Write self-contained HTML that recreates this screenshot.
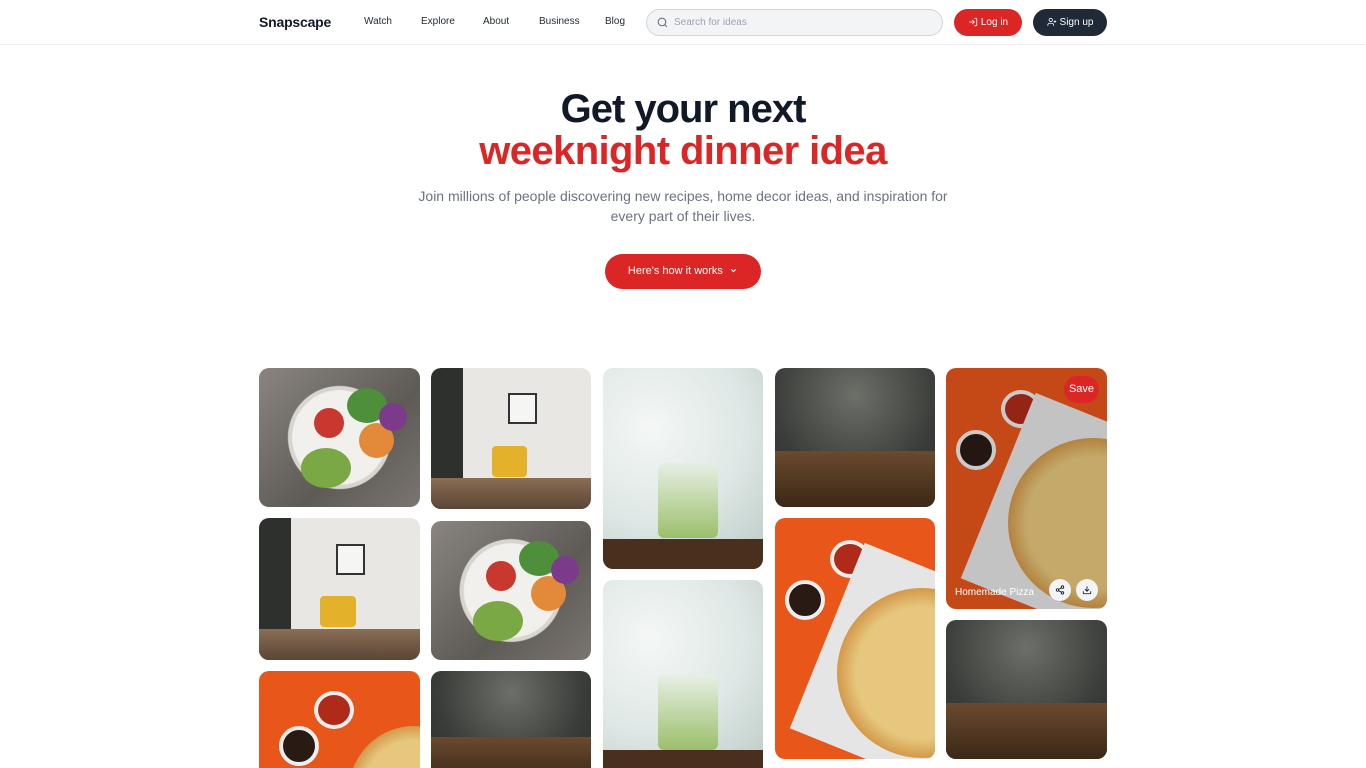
<!DOCTYPE html>
<html style="overflow:hidden;height:768px"><head><meta charset="utf-8">
<style>
*{box-sizing:border-box;margin:0;padding:0}
body{width:1366px;height:768px;overflow:hidden;background:#fff;font-family:"Liberation Sans",sans-serif;color:#111827;position:relative}
.hdr{position:absolute;left:0;top:0;width:1366px;height:45px;border-bottom:1px solid #eceef1;background:#fff}
.logo{position:absolute;left:259px;top:14px;font-weight:bold;font-size:14px;letter-spacing:-0.2px;color:#111827}
.nav{position:absolute;top:16px;font-size:10px;color:#1f2937}
.search{position:absolute;left:646px;top:9px;width:297px;height:27px;border:1px solid #d1d5db;border-radius:14px;background:#f3f4f6;font-size:10px;color:#9ca3af;padding:7px 0 0 27px}
.btn{position:absolute;top:9px;height:27px;border-radius:14px;color:#fff;font-size:10px;padding-top:8px;text-align:center}
h1{position:absolute;left:0;width:1366px;text-align:center;font-size:40px;font-weight:bold;letter-spacing:-1px;line-height:42px}
.sub{position:absolute;left:400px;width:566px;top:186px;text-align:center;font-size:14px;line-height:20px;color:#6b7280}
.cta{position:absolute;left:605px;top:254px;width:156px;height:35px;border-radius:18px;background:#dc2626;color:#fff;font-size:11px;text-align:center;padding-top:11px}
.t{position:absolute;border-radius:10px;overflow:hidden}
.salad{background:radial-gradient(circle at 50% 50%,#f1f0ec 0 44%,#d8d5cf 45% 48%,transparent 49%),linear-gradient(135deg,#8a8580,#5e5a56 60%,#7a756f)}
.salad i{position:absolute;border-radius:50%}
.room{background:linear-gradient(90deg,#2e302d 0 20%,#e8e7e4 20% 100%)}
.room:after{content:"";position:absolute;left:0;right:0;bottom:0;height:22%;background:linear-gradient(180deg,#8a6e55,#5b4535)}
.room b{position:absolute;left:38%;top:55%;width:22%;height:22%;background:#e3b22a;border-radius:4px;z-index:1}
.room u{position:absolute;left:48%;top:18%;width:18%;height:22%;background:#f5f5f3;border:2px solid #333}
.drink{background:radial-gradient(circle at 30% 30%,#f4f7f5,#dfe8e6 50%,#b9c9c4)}
.laptop{background:radial-gradient(circle at 50% 20%,#6d6f69,#3a3d39 60%,#2a2c29)}
.laptop:after{content:"";position:absolute;left:0;right:0;bottom:0;height:40%;background:linear-gradient(180deg,#6b4a2e,#3b2817)}
.pizza{background:#e8561a}
.pizza .pz{position:absolute;border-radius:50%;background:radial-gradient(circle,#e6c77d 0 55%,#d49b4c 70%,#b8732d 100%)}
.pizza .bw{position:absolute;border-radius:50%;border:4px solid #eee}
</style></head><body>
<div class="hdr">
<div class="logo">Snapscape</div>
<div class="nav" style="left:364px">Watch</div>
<div class="nav" style="left:421px">Explore</div>
<div class="nav" style="left:483px">About</div>
<div class="nav" style="left:539px">Business</div>
<div class="nav" style="left:605px">Blog</div>
<div class="search"><svg style="position:absolute;left:9px;top:6px" width="13" height="13" viewBox="0 0 24 24" fill="none" stroke="#6b7280" stroke-width="2"><circle cx="11" cy="11" r="7"/><path d="M20 20l-4-4"/></svg>Search for ideas</div>
<div class="btn" style="left:954px;width:68px;background:#dc2626"><svg style="vertical-align:-2px;margin-right:3px" width="10" height="10" viewBox="0 0 24 24" fill="none" stroke="#fff" stroke-width="2"><path d="M15 3h4a2 2 0 012 2v14a2 2 0 01-2 2h-4M10 17l5-5-5-5M15 12H3"/></svg>Log in</div>
<div class="btn" style="left:1033px;width:74px;background:#1f2937"><svg style="vertical-align:-2px;margin-right:3px" width="10" height="10" viewBox="0 0 24 24" fill="none" stroke="#fff" stroke-width="2"><circle cx="9" cy="7" r="4"/><path d="M2 21v-2a4 4 0 014-4h6a4 4 0 014 4v2M19 8v6M22 11h-6"/></svg>Sign up</div>
</div>
<h1 style="top:88px;color:#111827">Get your next</h1>
<h1 style="top:130px;color:#dc2626;letter-spacing:-0.6px">weeknight dinner idea</h1>
<div class="sub">Join millions of people discovering new recipes, home decor ideas, and inspiration for every part of their lives.</div>
<div class="cta">Here's how it works &nbsp;<svg style="vertical-align:-1px" width="9" height="9" viewBox="0 0 24 24" fill="none" stroke="#fff" stroke-width="3"><path d="M6 9l6 6 6-6"/></svg></div>

<div class="t salad" style="left:259px;top:368px;width:161px;height:139px"><i style="left:42px;top:80px;width:50px;height:40px;background:#7aa844"></i><i style="left:88px;top:20px;width:40px;height:35px;background:#4e8f3a"></i><i style="left:100px;top:55px;width:35px;height:35px;background:#e28a3a"></i><i style="left:55px;top:40px;width:30px;height:30px;background:#c9382f"></i><i style="left:120px;top:35px;width:28px;height:28px;background:#7b3a8a"></i></div>
<div class="t room" style="left:259px;top:518px;width:161px;height:142px"><u></u><b></b></div>
<div class="t pizza" style="left:259px;top:671px;width:161px;height:110px"><div class="bw" style="left:55px;top:20px;width:40px;height:38px;background:#b02a1a"></div><div class="bw" style="left:20px;top:55px;width:40px;height:40px;background:#2a1a14"></div><div class="pz" style="left:90px;top:55px;width:130px;height:130px"></div></div>
<div class="t room" style="left:431px;top:368px;width:160px;height:141px"><u></u><b></b></div>
<div class="t salad" style="left:431px;top:521px;width:160px;height:139px"><i style="left:42px;top:80px;width:50px;height:40px;background:#7aa844"></i><i style="left:88px;top:20px;width:40px;height:35px;background:#4e8f3a"></i><i style="left:100px;top:55px;width:35px;height:35px;background:#e28a3a"></i><i style="left:55px;top:40px;width:30px;height:30px;background:#c9382f"></i><i style="left:120px;top:35px;width:28px;height:28px;background:#7b3a8a"></i></div>
<div class="t laptop" style="left:431px;top:671px;width:160px;height:110px"></div>
<div class="t drink" style="left:603px;top:368px;width:160px;height:201px"><div style="position:absolute;left:55px;top:95px;width:60px;height:75px;border-radius:6px;background:linear-gradient(#e7efe5,#9cbf6a)"></div><div style="position:absolute;left:0;right:0;bottom:0;height:30px;background:#4a2e1e"></div></div>
<div class="t drink" style="left:603px;top:580px;width:160px;height:200px"><div style="position:absolute;left:55px;top:95px;width:60px;height:75px;border-radius:6px;background:linear-gradient(#e7efe5,#9cbf6a)"></div><div style="position:absolute;left:0;right:0;bottom:0;height:30px;background:#4a2e1e"></div></div>
<div class="t laptop" style="left:775px;top:368px;width:160px;height:139px"></div>
<div class="t pizza" style="left:775px;top:518px;width:160px;height:241px"><div class="bw" style="left:55px;top:22px;width:40px;height:38px;background:#b02a1a"></div><div class="bw" style="left:10px;top:62px;width:40px;height:40px;background:#2a1a14"></div><div style="position:absolute;left:45px;top:55px;width:200px;height:200px;background:#e5e5e5;transform:rotate(22deg)"></div><div class="pz" style="left:62px;top:70px;width:170px;height:170px"></div></div>
<div class="t pizza" style="left:946px;top:368px;width:161px;height:241px;filter:brightness(0.85)"><div class="bw" style="left:55px;top:22px;width:40px;height:38px;background:#b02a1a"></div><div class="bw" style="left:10px;top:62px;width:40px;height:40px;background:#2a1a14"></div><div style="position:absolute;left:45px;top:55px;width:200px;height:200px;background:#e5e5e5;transform:rotate(22deg)"></div><div class="pz" style="left:62px;top:70px;width:170px;height:170px"></div></div>
<div style="position:absolute;left:1064px;top:376px;width:35px;height:27px;border-radius:14px;background:#dc2626;color:#fff;font-size:11px;text-align:center;padding-top:7px">Save</div>
<div style="position:absolute;left:955px;top:587px;color:#fff;font-size:10px">Homemade Pizza</div>
<div style="position:absolute;left:1049px;top:579px;width:22px;height:22px;border-radius:50%;background:#f3f4f6"><svg style="position:absolute;left:6px;top:6px" width="10" height="10" viewBox="0 0 24 24" fill="none" stroke="#111" stroke-width="2"><circle cx="18" cy="5" r="3"/><circle cx="6" cy="12" r="3"/><circle cx="18" cy="19" r="3"/><path d="M8.6 13.5l6.8 4M15.4 6.5l-6.8 4"/></svg></div>
<div style="position:absolute;left:1076px;top:579px;width:22px;height:22px;border-radius:50%;background:#f3f4f6"><svg style="position:absolute;left:6px;top:6px" width="10" height="10" viewBox="0 0 24 24" fill="none" stroke="#111" stroke-width="2"><path d="M21 15v4a2 2 0 01-2 2H5a2 2 0 01-2-2v-4M7 10l5 5 5-5M12 15V3"/></svg></div>
<div class="t laptop" style="left:946px;top:620px;width:161px;height:139px"></div>
</body></html>
